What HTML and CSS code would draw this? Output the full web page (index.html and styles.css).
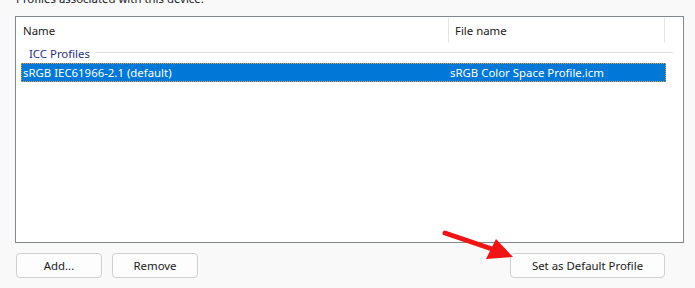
FILE: index.html
```html
<!DOCTYPE html>
<html lang="en">

<head>
    <meta charset="UTF-8">
    <meta name="viewport" content="width=device-width, initial-scale=1.0">
    <title>Color Management</title>
    <link rel="stylesheet" href="styles.css">
</head>

<body>
    <div class="panel">
        <p class="caption">Profiles associated with this device:</p>
        <div class="list">
            <div class="list-header">
                <div class="col col-name">Name</div>
                <div class="col col-file">File name</div>
            </div>
            <div class="group">
                <span>ICC Profiles</span>
                <div class="group-line"></div>
            </div>
            <div class="row selected">
                <div class="cell cell-name">sRGB IEC61966-2.1 (default)</div>
                <div class="cell cell-file">sRGB Color Space Profile.icm</div>
            </div>
        </div>
        <div class="actions">
            <button class="btn btn-small">Add...</button>
            <button class="btn btn-small">Remove</button>
            <div class="spacer"></div>
            <button class="btn btn-wide">Set as Default Profile</button>
        </div>
        <svg class="arrow" width="80" height="40" viewBox="0 0 80 40">
            <line x1="4" y1="5" x2="54" y2="22" stroke="#f01414" stroke-width="5" stroke-linecap="round" />
            <polygon points="72,29 45,31 55,11" fill="#f01414" />
        </svg>
    </div>
</body>

</html>
```

FILE: styles.css
```css
body {
    margin: 0;
    background-color: #f9f9f9;
    font-family: 'Noto Sans', 'Liberation Sans', sans-serif;
    font-size: 11.4px;
    color: #1a1a1a;
}

.panel {
    position: relative;
    width: 695px;
    height: 288px;
    overflow: hidden;
}

.caption {
    margin: -10px 0 0 16px;
    height: 26px;
    line-height: 17px;
}

.list {
    margin-left: 15px;
    width: 667px;
    height: 225px;
    border: 1px solid #828790;
    background-color: #ffffff;
}

.list-header {
    display: flex;
    height: 26px;
}

.col {
    display: flex;
    align-items: center;
    margin-top: 1px;
    height: 25px;
    border-right: 1px solid #e5e5e5;
}

.col-name {
    width: 425px;
    padding-left: 7px;
}

.col-file {
    width: 209px;
    padding-left: 6px;
}

.group {
    display: flex;
    align-items: center;
    height: 20px;
    padding-left: 13px;
    color: #1e3287;
}

.group-line {
    flex: 1;
    height: 1px;
    margin: 0 10px 1px 5px;
    background-color: #dcdee4;
}

.row {
    display: flex;
    align-items: center;
    height: 19px;
    margin: 0 17px 0 5px;
    box-sizing: border-box;
}

.selected {
    background-color: #0078d7;
    color: #ffffff;
    outline: 1px dotted #e8a040;
    outline-offset: -1px;
}

.cell-name {
    width: 427px;
    padding-left: 2px;
}

.cell-file {
    flex: 1;
}

.actions {
    display: flex;
    margin: 10px 0 0 16px;
    width: 649px;
    gap: 10px;
}

.spacer {
    flex: 1;
}

.btn {
    height: 25px;
    border: 1px solid #d0d0d0;
    border-radius: 4px;
    background-color: #fdfdfd;
    font-family: inherit;
    font-size: 11.4px;
    color: #1a1a1a;
    padding: 0;
}

.btn-small {
    width: 86px;
}

.btn-wide {
    width: 155px;
}

.arrow {
    position: absolute;
    left: 441px;
    top: 228px;
}
```
